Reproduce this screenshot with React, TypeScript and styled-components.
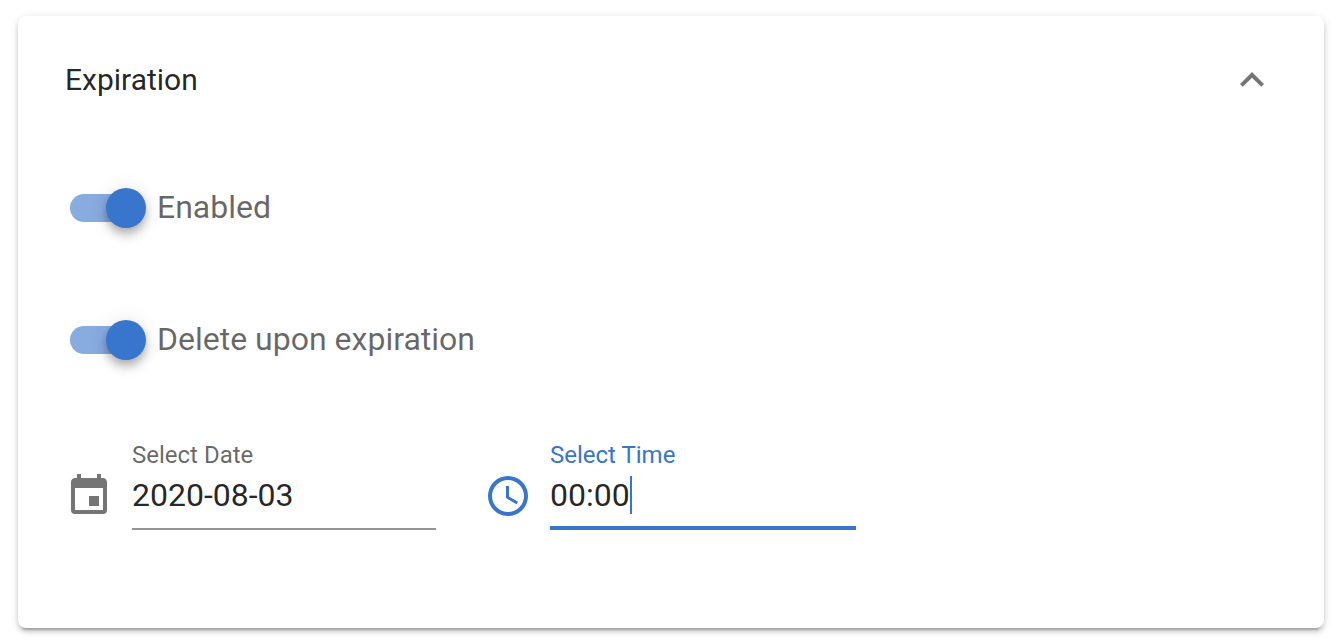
import React, { useState } from "react";
import styled, { createGlobalStyle } from "styled-components";

const BLUE = "#3875cc";
const GREY = "#757575";
const INK = "rgba(0, 0, 0, 0.87)";
const MUTED = "rgba(0, 0, 0, 0.6)";

const GlobalStyle = createGlobalStyle`
  * { box-sizing: border-box; }
  body {
    margin: 0;
    background: #fff;
    font-family: Roboto, "Liberation Sans", sans-serif;
  }
`;

const Card = styled.section`
  margin: 16px 18px 14px;
  border-radius: 8px;
  background: #fff;
  box-shadow:
    0 6px 2px -4px rgba(0, 0, 0, 0.2),
    0 4px 4px 0 rgba(0, 0, 0, 0.14),
    0 2px 10px 0 rgba(0, 0, 0, 0.12);
`;

const Header = styled.button`
  display: flex;
  align-items: center;
  justify-content: space-between;
  width: 100%;
  height: 128px;
  padding: 0 48px 0 47px;
  border: 0;
  background: none;
  color: ${INK};
  font: 400 30px/40px Roboto, "Liberation Sans", sans-serif;
  text-align: left;
  cursor: pointer;
`;

const Icon = styled.svg<{ $color: string }>`
  flex: none;
  width: 48px;
  height: 48px;
  fill: ${(p) => p.$color};
`;

const Body = styled.div`
  padding: 40px 48px 98px;
`;

const SwitchRow = styled.label`
  display: flex;
  align-items: center;
  gap: 15px;
  width: fit-content;
  height: 48px;
  margin-bottom: 84px;
  padding-left: 4px;
  color: ${MUTED};
  font-size: 32px;
  line-height: 46px;
  cursor: pointer;
`;

const SwitchText = styled.span`
  padding-bottom: 2px;
`;

const SwitchInput = styled.input`
  appearance: none;
  display: flex;
  align-items: center;
  flex: none;
  width: 72px;
  height: 28px;
  margin: 0;
  border-radius: 14px;
  background: rgba(0, 0, 0, 0.38);
  cursor: pointer;

  &::after {
    content: "";
    flex: none;
    width: 40px;
    height: 40px;
    margin-left: -4px;
    border-radius: 50%;
    background: #fff;
    box-shadow:
      0 4px 8px -2px rgba(0, 0, 0, 0.2),
      0 8px 10px 0 rgba(0, 0, 0, 0.14),
      0 2px 20px 0 rgba(0, 0, 0, 0.12);
  }

  &:checked {
    background: #88abe0;
  }

  &:checked::after {
    margin-left: 36px;
    background: ${BLUE};
  }
`;

const Fields = styled.div`
  display: flex;
  flex-wrap: wrap;
  gap: 48px;
  margin-top: -8px;
`;

const Field = styled.div`
  display: flex;
  align-items: flex-start;
  gap: 18px;

  > svg {
    margin-top: 32px;
  }
`;

const FieldBox = styled.div<{ $active?: boolean }>`
  display: flex;
  flex-direction: column;
  width: ${(p) => (p.$active ? 306 : 304)}px;
  height: 90px;
  border-bottom: ${(p) => (p.$active ? `4px solid ${BLUE}` : "2px solid #949494")};
`;

const FieldLabel = styled.label<{ $active?: boolean }>`
  padding-bottom: 2px;
  color: ${(p) => (p.$active ? BLUE : MUTED)};
  font-size: 24px;
  line-height: 30px;
`;

const InputWrap = styled.div`
  position: relative;
`;

const TextInput = styled.input`
  display: block;
  width: 100%;
  height: 48px;
  padding: 0 0 2px;
  border: 0;
  outline: 0;
  background: none;
  color: ${INK};
  caret-color: transparent;
  font: 400 32px/46px Roboto, "Liberation Sans", sans-serif;
`;

const Caret = styled.span`
  position: absolute;
  top: 4px;
  left: 80px;
  width: 2px;
  height: 38px;
  background: ${BLUE};
`;

export default function App() {
  const [open, setOpen] = useState(true);
  const [date, setDate] = useState("2020-08-03");
  const [time, setTime] = useState("00:00");

  return (
    <>
      <GlobalStyle />
      <Card>
        <Header type="button" aria-expanded={open} onClick={() => setOpen(!open)}>
          Expiration
          <Icon $color={GREY} viewBox="0 0 24 24" aria-hidden="true">
            <path d="M16.59 15.42 12 10.83 7.41 15.42 6 14 12 8 18 14Z" />
          </Icon>
        </Header>
        {open && (
          <Body>
            <SwitchRow>
              <SwitchInput type="checkbox" role="switch" defaultChecked />
              <SwitchText>Enabled</SwitchText>
            </SwitchRow>
            <SwitchRow>
              <SwitchInput type="checkbox" role="switch" defaultChecked />
              <SwitchText>Delete upon expiration</SwitchText>
            </SwitchRow>
            <Fields>
              <Field>
                <Icon $color={GREY} viewBox="0.5 0 24 24" aria-hidden="true">
                  <path d="M19,19H5V8H19M16,1V3H8V1H6V3H5C3.89,3 3,3.89 3,5V19A2,2 0 0,0 5,21H19A2,2 0 0,0 21,19V5C21,3.89 20.1,3 19,3H18V1M17,12H12V17H17V12Z" />
                </Icon>
                <FieldBox>
                  <FieldLabel htmlFor="date">Select Date</FieldLabel>
                  <TextInput id="date" type="text" value={date} onChange={(e) => setDate(e.target.value)} />
                </FieldBox>
              </Field>
              <Field>
                <Icon $color={BLUE} viewBox="0 0 24 24" aria-hidden="true">
                  <path d="M12,20A8,8 0 0,0 20,12A8,8 0 0,0 12,4A8,8 0 0,0 4,12A8,8 0 0,0 12,20M12,2A10,10 0 0,1 22,12A10,10 0 0,1 12,22C6.47,22 2,17.5 2,12A10,10 0 0,1 12,2M12.5,7V12.25L17,14.92L16.25,16.15L11,13V7H12.5Z" />
                </Icon>
                <FieldBox $active>
                  <FieldLabel $active htmlFor="time">Select Time</FieldLabel>
                  <InputWrap>
                    <TextInput id="time" type="text" value={time} onChange={(e) => setTime(e.target.value)} />
                    <Caret aria-hidden="true" />
                  </InputWrap>
                </FieldBox>
              </Field>
            </Fields>
          </Body>
        )}
      </Card>
    </>
  );
}
